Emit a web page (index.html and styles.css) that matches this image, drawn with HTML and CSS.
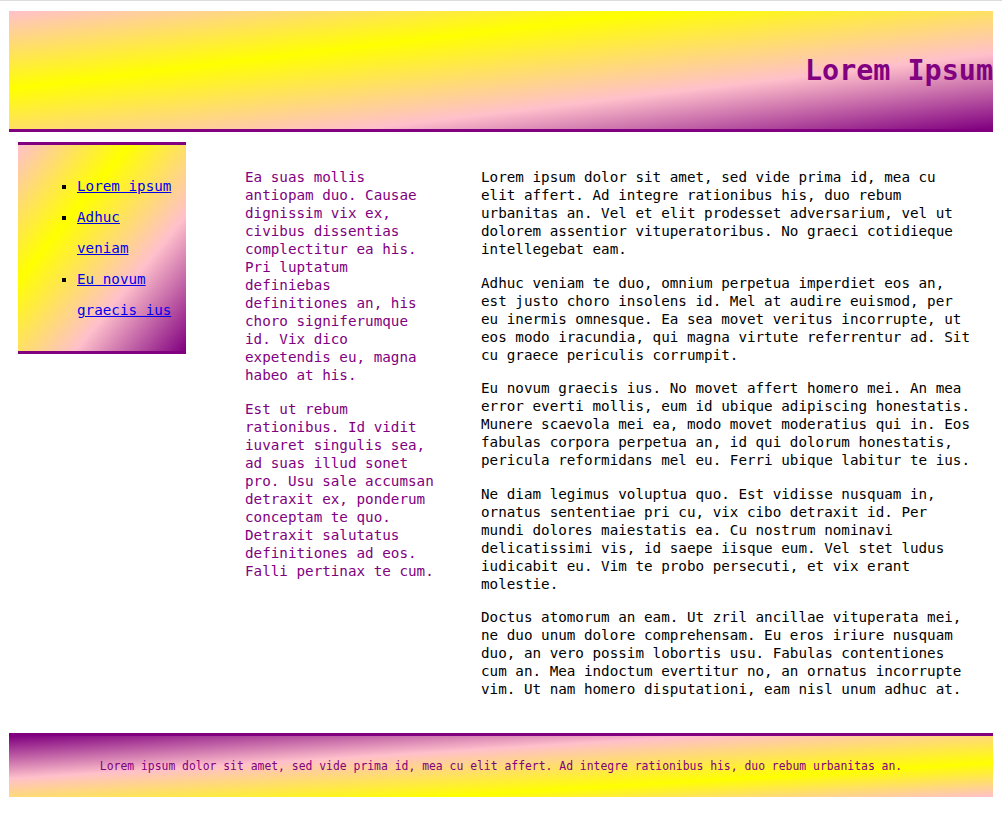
FILE: index.html
```html
<!DOCTYPE html>
<html lang="la">
<head>
<meta charset="utf-8">
<title>Lorem Ipsum</title>
<link rel="stylesheet" href="styles.css">
</head>
<body>
<header class="masthead">
  <h1 class="title">Lorem Ipsum</h1>
</header>
<div class="main">
  <nav class="sidebar">
    <ul class="menu">
      <li><a href="#">Lorem ipsum</a></li>
      <li><a href="#">Adhuc veniam</a></li>
      <li><a href="#">Eu novum graecis ius</a></li>
    </ul>
  </nav>
  <div class="aside-col">
    <p>Ea suas mollis antiopam duo. Causae dignissim vix ex, civibus dissentias complectitur ea his. Pri luptatum definiebas definitiones an, his choro signiferumque id. Vix dico expetendis eu, magna habeo at his.</p>
    <p>Est ut rebum rationibus. Id vidit iuvaret singulis sea, ad suas illud sonet pro. Usu sale accumsan detraxit ex, ponderum conceptam te quo. Detraxit salutatus definitiones ad eos. Falli pertinax te cum.</p>
  </div>
  <div class="content-col">
    <p>Lorem ipsum dolor sit amet, sed vide prima id, mea cu elit affert. Ad integre rationibus his, duo rebum urbanitas an. Vel et elit prodesset adversarium, vel ut dolorem assentior vituperatoribus. No graeci cotidieque intellegebat eam.</p>
    <p>Adhuc veniam te duo, omnium perpetua imperdiet eos an, est justo choro insolens id. Mel at audire euismod, per eu inermis omnesque. Ea sea movet veritus incorrupte, ut eos modo iracundia, qui magna virtute referrentur ad. Sit cu graece periculis corrumpit.</p>
    <p>Eu novum graecis ius. No movet affert homero mei. An mea error everti mollis, eum id ubique adipiscing honestatis. Munere scaevola mei ea, modo movet moderatius qui in. Eos fabulas corpora perpetua an, id qui dolorum honestatis, pericula reformidans mel eu. Ferri ubique labitur te ius.</p>
    <p>Ne diam legimus voluptua quo. Est vidisse nusquam in, ornatus sententiae pri cu, vix cibo detraxit id. Per mundi dolores maiestatis ea. Cu nostrum nominavi delicatissimi vis, id saepe iisque eum. Vel stet ludus iudicabit eu. Vim te probo persecuti, et vix erant molestie.</p>
    <p>Doctus atomorum an eam. Ut zril ancillae vituperata mei, ne duo unum dolore comprehensam. Eu eros iriure nusquam duo, an vero possim lobortis usu. Fabulas contentiones cum an. Mea indoctum evertitur no, an ornatus incorrupte vim. Ut nam homero disputationi, eam nisl unum adhuc at.</p>
  </div>
</div>
<footer class="foot">
  <p>Lorem ipsum dolor sit amet, sed vide prima id, mea cu elit affert. Ad integre rationibus his, duo rebum urbanitas an.</p>
</footer>
</body>
</html>
```

FILE: styles.css
```css
html {
  border-top: 1px solid #dcdcdc;
  background: #fff;
}

body {
  margin: 10px 9px 0;
  font-family: "DejaVu Sans Mono", monospace;
  font-size: 14.25px;
  line-height: 18px;
  color: #000;
}

.masthead {
  height: 118px;
  border-bottom: 3px solid #800080;
  background: linear-gradient(to bottom right, #ffc0cb 0%, #ffff00 33%, #ffc0cb 68%, #800080 100%);
  display: flex;
  align-items: center;
  justify-content: flex-end;
}

.title {
  margin: 0;
  font-size: 28.4px;
  line-height: normal;
  font-weight: bold;
  color: #800080;
}

.main {
  display: flex;
  align-items: flex-start;
  margin-top: 10px;
}

.sidebar {
  flex: 0 0 168px;
  margin-left: 9px;
  border-top: 3px solid #800080;
  border-bottom: 3px solid #800080;
  background: linear-gradient(to bottom right, #ffc0cb 0%, #ffff00 33%, #ffc0cb 67%, #800080 100%);
}

.menu {
  margin: 26px 0 25px;
  padding: 0 12px 0 59px;
  list-style: square;
  line-height: 31px;
}

.menu a {
  color: #0000ee;
  text-decoration: underline;
}

.aside-col {
  flex: 0 0 236px;
  margin-left: 59px;
  padding-top: 10.5px;
  color: #800080;
}

.aside-col p {
  max-width: 22.5ch;
  margin: 15.5px 0;
}

.content-col {
  flex: 0 0 57.5ch;
  padding-top: 10.5px;
}

.content-col p {
  margin: 15.5px 0;
}

.foot {
  margin-top: 19px;
  height: 61px;
  border-top: 3px solid #800080;
  background: linear-gradient(to bottom right, #800080 0%, #ffc0cb 35%, #ffff00 72%, #ffc0cb 100%);
  display: flex;
  align-items: center;
  justify-content: center;
  font-size: 11.4px;
  color: #800080;
}

.foot p {
  margin: 0;
}
```
